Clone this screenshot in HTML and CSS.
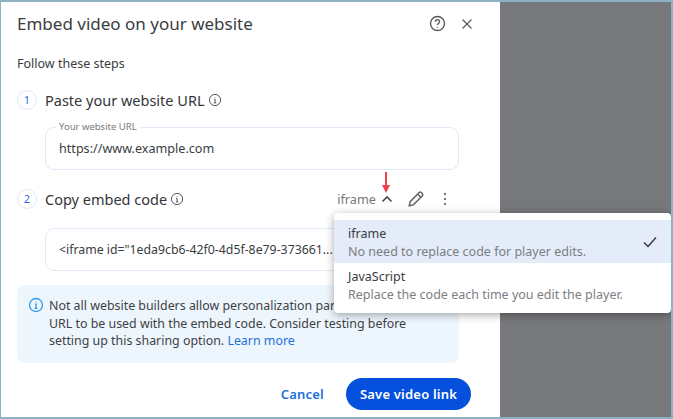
FILE: index.html
```html
<!DOCTYPE html>
<html lang="en">
<head>
<meta charset="utf-8">
<title>Embed video on your website</title>
<link rel="stylesheet" href="styles.css">
</head>
<body>
<div class="frame">
  <section class="dialog">
    <header class="head">
      <h1>Embed video on your website</h1>
      <svg class="help" viewBox="0 0 16 16"><circle cx="8" cy="8" r="6.6"/><path d="M6.1 6.3a1.9 1.9 0 1 1 2.9 1.6c-.7.4-1 .8-1 1.4"/><path class="dot" d="M8 11.2v.7"/></svg>
      <svg class="close" viewBox="0 0 12 12"><path d="M1.5 1.5l9 9M10.500 1.500l-9 9"/></svg>
    </header>
    <p class="intro">Follow these steps</p>
    <div class="step step-one">
      <span class="num">1</span>
      <span class="step-title">Paste your website URL</span>
      <svg class="info" viewBox="0 0 14 14"><circle cx="7" cy="7" r="5.600"/><path d="M6 6.300h1.100v3.500M5.800 9.900h2.500M7 4v.6"/></svg>
    </div>
    <div class="field url-field">
      <span class="legend">Your website URL</span>
      https://www.example.com
    </div>
    <div class="step step-two">
      <span class="num">2</span>
      <span class="step-title">Copy embed code</span>
      <svg class="info" viewBox="0 0 14 14"><circle cx="7" cy="7" r="5.600"/><path d="M6 6.300h1.100v3.500M5.800 9.900h2.500M7 4v.6"/></svg>
      <span class="tools">
        <span class="type">iframe</span>
        <svg class="chev" viewBox="0 0 12 8"><path d="M1.500 6.500L6 2l4.500 4.500"/></svg>
        <svg class="pencil" viewBox="0 0 16 16"><path d="M2 14l.8-3.600L10.900 2.300a1.300 1.300 0 0 1 1.800 0l1 1a1.300 1.300 0 0 1 0 1.800L5.600 13.200z"/><path d="M9.500 3.700l2.800 2.800"/></svg>
        <svg class="dots" viewBox="0 0 4 14"><circle cx="2" cy="2" r="1.100"/><circle cx="2" cy="7" r="1.100"/><circle cx="2" cy="12" r="1.100"/></svg>
      </span>
    </div>
    <div class="field code-field">&lt;iframe id="1eda9cb6-42f0-4d5f-8e79-373661...</div>
    <div class="notice">
      <svg class="notice-icon" viewBox="0 0 16 16"><circle cx="8" cy="8" r="6.500"/><path d="M6.800 7.200H8v4M6.600 11.300h2.800M8 4.500v.8"/></svg>
      <p>Not all website builders allow personalization parameters in the URL to be used with the embed code. Consider testing before setting up this sharing option. <a href="#">Learn more</a></p>
    </div>
    <footer class="actions">
      <button class="cancel">Cancel</button>
      <button class="save">Save video link</button>
    </footer>
  </section>
  <div class="backdrop"></div>
  <svg class="arrow" viewBox="0 0 10 22"><path class="shaft" d="M5 0v15"/><path class="tip" d="M1 13h8l-4 8z"/></svg>
  <div class="menu">
    <div class="option selected">
      <div>
        <div class="opt-title">iframe</div>
        <div class="opt-desc">No need to replace code for player edits.</div>
      </div>
      <svg class="check" viewBox="0 0 14 12"><path d="M1 6.500l4 4L13 1.500"/></svg>
    </div>
    <div class="option">
      <div>
        <div class="opt-title">JavaScript</div>
        <div class="opt-desc">Replace the code each time you edit the player.</div>
      </div>
    </div>
  </div>
</div>
</body>
</html>
```

FILE: styles.css
```css
* { box-sizing: border-box; }
html, body { margin: 0; padding: 0; }
body { font-family: "Noto Sans", "Open Sans", sans-serif; color: #3a3d41; }
.frame {
  position: relative;
  width: 673px;
  height: 419px;
  border: solid #8fb1c6;
  border-width: 2px 2px 2px 1px;
  display: flex;
  overflow: hidden;
}
.dialog {
  width: 499px;
  background: #fff;
  border-top-right-radius: 4px;
  padding: 0 0 0 16px;
  flex: none;
}
.backdrop { flex: 1; background: #77787b; }
.head { display: flex; align-items: center; height: 43px; }
.head h1 { margin: 0; font-size: 17px; font-weight: 400; line-height: 43px; width: 412px; color: #3a3d41; }
.help { width: 17px; height: 17px; fill: none; stroke: #55585c; stroke-width: 1.300; }
.help .dot { stroke-width: 1.500; }
.close { width: 12px; height: 12px; margin-left: 15px; fill: none; stroke: #55585c; stroke-width: 1.200; }
.intro { margin: 10px 0 0; font-size: 12.500px; line-height: 18px; color: #3a3d41; }
.step { display: flex; align-items: center; height: 22px; }
.step-one { margin-top: 16px; }
.step-two { margin-top: 18px; padding-right: 53px; }
.num {
  width: 20px; height: 20px; border-radius: 50%; border: 1px solid #dfe8f8;
  color: #2a6fe0; font-size: 11px; line-height: 18px; text-align: center; margin-right: 8px; flex: none;
}
.step-title { font-size: 14.500px; line-height: 22px; color: #33363a; }
.info { width: 14px; height: 14px; margin-left: 3px; fill: none; stroke: #55585c; stroke-width: 1; }
.tools { margin-left: auto; display: flex; align-items: center; }
.type { font-size: 12.700px; color: #77797d; }
.chev { width: 12px; height: 8px; margin-left: 5px; fill: none; stroke: #44474b; stroke-width: 1.600; }
.pencil { width: 18px; height: 18px; margin-left: 14px; fill: none; stroke: #5d6064; stroke-width: 1.300; }
.dots { width: 4px; height: 14px; margin-left: 18px; fill: #55585c; }
.field {
  position: relative;
  margin-left: 28px;
  width: 414px;
  height: 43px;
  border: 1px solid #e1e9f7;
  border-radius: 9px;
  font-size: 12.600px;
  line-height: 41px;
  padding-left: 13px;
  color: #3a3d41;
}
.url-field { margin-top: 16px; }
.code-field { margin-top: 18px; font-size: 12.300px; }
.legend {
  position: absolute; left: 10px; top: -7px; padding: 0 3px; background: #fff;
  font-size: 9.500px; line-height: 12px; color: #77797d;
}
.notice {
  margin-top: 14px;
  width: 442px;
  height: 78px;
  background: #eef6fd;
  border-radius: 8px;
  padding: 12px 0 0 11px;
  display: flex;
}
.notice-icon { width: 16px; height: 16px; flex: none; fill: none; stroke: #2f9be8; stroke-width: 1.300; }
.notice p { margin: 0 0 0 5px; width: 375px; font-size: 12.400px; line-height: 17.500px; color: #3e4145; }
.notice a { color: #1f6fdc; text-decoration: none; }
.actions { display: flex; justify-content: flex-end; align-items: center; margin-top: 15px; width: 454px; gap: 22px; }
.actions button { font-family: inherit; font-size: 13px; font-weight: 600; border: 0; cursor: pointer; letter-spacing: .2px; }
.cancel { background: none; color: #1f6fdc; padding: 0; }
.save { background: #0550dc; color: #fff; height: 32px; width: 125px; border-radius: 16px; padding: 0; }
.arrow { position: absolute; left: 380px; top: 170px; width: 10px; height: 22px; }
.arrow .shaft { stroke: #f0404c; stroke-width: 2; fill: none; }
.arrow .tip { fill: #f0404c; }
.menu {
  position: absolute;
  left: 333px;
  top: 211px;
  width: 337px;
  height: 100px;
  background: #fff;
  border-radius: 4px;
  box-shadow: 0 2px 8px rgba(0,0,0,.35);
  padding-top: 7px;
}
.option { height: 43px; padding: 3px 14px 0 14px; display: flex; justify-content: space-between; align-items: center; }
.option.selected { background: #e4ebf9; }
.opt-title { font-size: 12.500px; line-height: 18px; color: #3a3d41; }
.opt-desc { font-size: 12.500px; line-height: 18px; color: #7b7e82; }
.check { width: 14px; height: 12px; margin-top: -3px; fill: none; stroke: #33363a; stroke-width: 1.400; }
```
